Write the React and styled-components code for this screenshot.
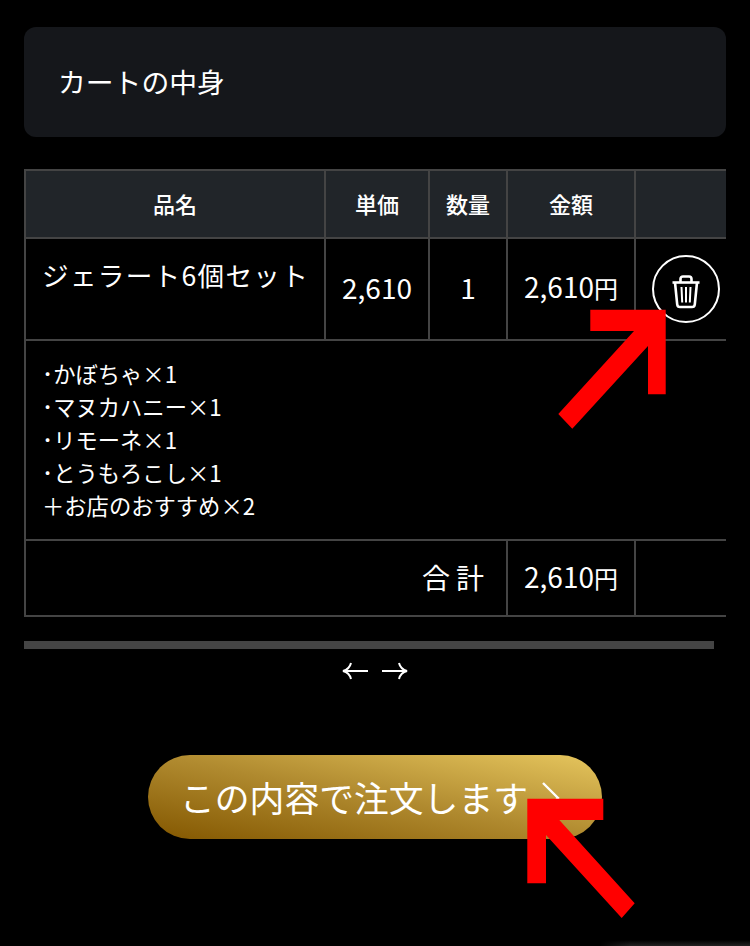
import React from "react";
import styled, { createGlobalStyle } from "styled-components";

const Global = createGlobalStyle`
  html, body { margin: 0; padding: 0; background: #000; }
  body { font-family: "Noto Sans CJK JP", "Noto Sans", sans-serif; color: #fff; }
`;
const Page = styled.div`
  position: relative;
  width: 750px;
  height: 946px;
  overflow: hidden;
  box-sizing: border-box;
  padding: 27px 24px 0;
`;
const TitleCard = styled.div`
  height: 110px;
  box-sizing: border-box;
  background: #15171b;
  border-radius: 12px;
  padding: 0 34px;
  display: flex;
  align-items: center;
  font-size: 27.8px;
  line-height: 1;
`;
const TableScroll = styled.div`
  margin-top: 32px;
  overflow: hidden;
  height: 450px;
`;
const Table = styled.table`
  border-collapse: collapse;
  table-layout: fixed;
  width: 714px;
  border: 2px solid #444;
`;
const Head = styled.th`
  height: 68px;
  padding: 0 0 2px;
  box-sizing: border-box;
  border: 2px solid #444;
  background: #212529;
  font-size: 22px;
  font-weight: 500;
  text-align: center;
`;
const Cell = styled.td`
  height: ${p => p.$h || 102}px;
  padding: 0 0 ${p => p.$pb ?? 0}px;
  box-sizing: border-box;
  border: 2px solid #444;
  font-size: 28px;
  line-height: 40px;
  text-align: center;
  vertical-align: middle;
`;
const NameCell = styled(Cell)`
  text-align: left;
  vertical-align: top;
  padding: 15px 0 0 16px;
  font-size: 26.6px;
  line-height: 42px;
  letter-spacing: 1.3px;
`;
const DetailCell = styled(Cell)`
  text-align: left;
  padding: 0 0 2px 16px;
  font-size: 22.3px;
  line-height: 33px;
`;
const TotalLabel = styled(Cell)`
  text-align: right;
  padding: 0 16px 3px 0;
  letter-spacing: 6px;
`;
const Yen = styled.span`
  font-size: 24px;
`;
const TrashButton = styled.button`
  width: 68px;
  height: 68px;
  padding: 5px 0 0;
  margin: 0 0 0 16px;
  border: 2px solid #fff;
  border-radius: 50%;
  background: transparent;
  color: #fff;
  display: flex;
  align-items: center;
  justify-content: center;
`;
const Scrollbar = styled.div`
  margin-top: 22px;
  width: 690px;
  height: 8px;
  background: #444;
`;
const ScrollHints = styled.div`
  margin: 9px 0 0 6px;
  width: 690px;
  display: flex;
  justify-content: center;
  gap: 14px;
  color: #fff;
  height: 26px;
  align-items: center;
`;
const OrderWrap = styled.div`
  margin-top: 71px;
  display: flex;
  justify-content: center;
`;
const OrderButton = styled.button`
  width: 454px;
  height: 84px;
  border: 0;
  border-radius: 42px;
  background: linear-gradient(to top right, #835700 0%, #b08a2f 50%, #e6c65e 100%);
  color: #fff;
  font-family: inherit;
  font-size: 34.8px;
  white-space: nowrap;
  display: flex;
  align-items: center;
  padding: 0 0 0 32px;
  gap: 12px;
`;
const Callout = styled.svg`
  position: absolute;
  left: 0;
  top: 0;
  fill: #ff0000;
  pointer-events: none;
`;
const BottomGlow = styled.div`
  position: absolute;
  left: 600px;
  right: 0;
  bottom: 0;
  height: 6px;
  background: linear-gradient(to bottom, #000, #222);
  mask-image: linear-gradient(to right, transparent, #000 30px);
`;

const ArrowHint = ({ flip }) => (
  <svg width="26" height="18" viewBox="0 0 26 18" fill="none" stroke="#fff" strokeWidth="2" style={flip ? { transform: "scaleX(-1)" } : undefined}>
    <path d="M1 9h25M9 1C8 5 5 8 1 9c4 1 7 4 8 8" />
  </svg>
);

export default function App() {
  return (
    <Page>
      <Global />
      <TitleCard>カートの中身</TitleCard>
      <TableScroll>
        <Table>
          <colgroup>
            <col style={{ width: 300 }} />
            <col style={{ width: 104 }} />
            <col style={{ width: 78 }} />
            <col style={{ width: 128 }} />
            <col style={{ width: 104 }} />
          </colgroup>
          <thead>
            <tr>
              <Head>品名</Head>
              <Head>単価</Head>
              <Head>数量</Head>
              <Head>金額</Head>
              <Head />
            </tr>
          </thead>
          <tbody>
            <tr>
              <NameCell>ジェラート6個セット</NameCell>
              <Cell $pb={5}>2,610</Cell>
              <Cell $pb={5}>1</Cell>
              <Cell $pb={5}>2,610<Yen>円</Yen></Cell>
              <Cell>
                <TrashButton aria-label="削除">
                  <svg width="30" height="34" viewBox="0 0 30 34" fill="none" stroke="#fff" strokeWidth="2.6">
                    <path d="M1.5 7.5h27" />
                    <path d="M9.5 7V4C9.5 2.5 10.5 1.5 12 1.5h6c1.5 0 2.5 1 2.5 2.5v3" />
                    <path d="M4 7.5l2.2 21.8c.2 1.6 1.3 2.7 2.8 2.7h12c1.5 0 2.6-1.1 2.8-2.7L26 7.5" />
                    <path d="M10.5 12l.7 15.5M15 12v15.5M19.5 12l-.7 15.5" strokeWidth="2" />
                  </svg>
                </TrashButton>
              </Cell>
            </tr>
            <tr>
              <DetailCell colSpan={5} $h={200}>
                ･かぼちゃ×1<br />
                ･マヌカハニー×1<br />
                ･リモーネ×1<br />
                ･とうもろこし×1<br />
                ＋お店のおすすめ×2
              </DetailCell>
            </tr>
            <tr>
              <TotalLabel colSpan={3} $h={76}>合計</TotalLabel>
              <Cell $h={76} $pb={3}>2,610<Yen>円</Yen></Cell>
              <Cell $h={76} />
            </tr>
          </tbody>
        </Table>
      </TableScroll>
      <Scrollbar />
      <ScrollHints>
        <ArrowHint />
        <ArrowHint flip />
      </ScrollHints>
      <OrderWrap>
        <OrderButton>
          この内容で注文します
          <svg width="24" height="36" viewBox="0 0 24 36" fill="none" stroke="#fff" strokeWidth="2.4">
            <path d="M3 4l15 15L3 34" />
          </svg>
        </OrderButton>
      </OrderWrap>
      <Callout width="750" height="946" viewBox="0 0 750 946">
        <polygon points="590.3,309.7 665.7,309.7 665.7,394.3 648,394.3 648,346 572.3,428.7 558.3,414 634,331 590.3,331" />
        <polygon points="527.3,798.7 603.3,798.7 603.3,820 559.3,820 634.7,903.3 621.7,918 546,835 546,883.3 527.3,883.3" />
      </Callout>
      <BottomGlow />
    </Page>
  );
}
